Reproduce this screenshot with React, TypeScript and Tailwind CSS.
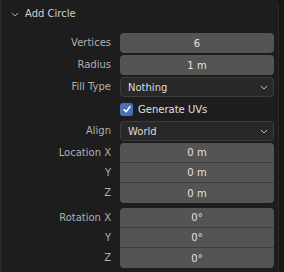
import React from 'react';

const font = { fontFamily: '"DejaVu Sans", "Liberation Sans", sans-serif' };

const Label: React.FC<{ text: string }> = ({ text }) => (
  <div className="w-[120px] shrink-0 pr-[9px] text-right text-[#b0b0b0] leading-[20px]">{text}</div>
);

const NumberField: React.FC<{ value: string; className?: string }> = ({ value, className = 'rounded-[4px]' }) => (
  <div className={`w-[154px] h-[20px] bg-[#545454] text-[#e2e2e2] flex items-center justify-center ${className}`}>
    {value}
  </div>
);

const Chevron: React.FC<{ className?: string }> = ({ className }) => (
  <svg viewBox="0 0 10 6" className={className} fill="none" stroke="currentColor" strokeWidth="1.2">
    <path d="M1 1 L5 5 L9 1" />
  </svg>
);

const Dropdown: React.FC<{ value: string }> = ({ value }) => (
  <div className="w-[154px] h-[20px] bg-[#282828] border border-[#3d3d3d] rounded-[4px] text-[#dcdcdc] flex items-center justify-between pl-[7px] pr-[5px]">
    <span>{value}</span>
    <Chevron className="w-[8px] h-[5px] text-[#c8c8c8]" />
  </div>
);

const Row: React.FC<{ label: string; children: React.ReactNode }> = ({ label, children }) => (
  <div className="flex items-center">
    <Label text={label} />
    {children}
  </div>
);

const Group: React.FC<{ title: string; values: string[] }> = ({ title, values }) => (
  <div className="flex flex-col">
    {values.map((v, i) => (
      <Row key={i} label={i === 0 ? `${title} X` : i === 1 ? 'Y' : 'Z'}>
        <NumberField
          value={v}
          className={
            i === 0
              ? 'rounded-t-[4px] border-b border-[#3f3f3f]'
              : i === values.length - 1
              ? 'rounded-b-[4px]'
              : 'border-b border-[#3f3f3f]'
          }
        />
      </Row>
    ))}
  </div>
);

export default function App() {
  return (
    <div className="w-[284px] h-[272px] bg-[#161616] text-[10px]" style={font}>
      <div className="w-[279px] h-full bg-[#1d1d1d] border-l border-r border-[#2a2a2a] rounded-tr-[6px]">
        <div className="h-[33px] flex items-start pt-[6px] pl-[10px] gap-[6px] text-[#d0d0d0]">
          <Chevron className="w-[8px] h-[5px] mt-[6px] text-[#b0b0b0]" />
          <span className="leading-[16px]">Add Circle</span>
        </div>
        <div className="flex flex-col gap-[2px] -ml-px">
          <Row label="Vertices"><NumberField value="6" /></Row>
          <Row label="Radius"><NumberField value="1 m" /></Row>
          <Row label="Fill Type"><Dropdown value="Nothing" /></Row>
          <Row label="">
            <div className="h-[20px] flex items-center gap-[5px] text-[#e0e0e0]">
              <div className="w-[13px] h-[13px] rounded-[3px] bg-[#4772b3] flex items-center justify-center">
                <svg viewBox="0 0 12 12" className="w-[10px] h-[10px]" fill="none" stroke="white" strokeWidth="1.8">
                  <path d="M2 6.5 L5 9.2 L10 2.8" />
                </svg>
              </div>
              <span>Generate UVs</span>
            </div>
          </Row>
          <Row label="Align"><Dropdown value="World" /></Row>
          <Group title="Location" values={['0 m', '0 m', '0 m']} />
          <div className="h-px" />
          <Group title="Rotation" values={['0°', '0°', '0°']} />
        </div>
      </div>
    </div>
  );
}
